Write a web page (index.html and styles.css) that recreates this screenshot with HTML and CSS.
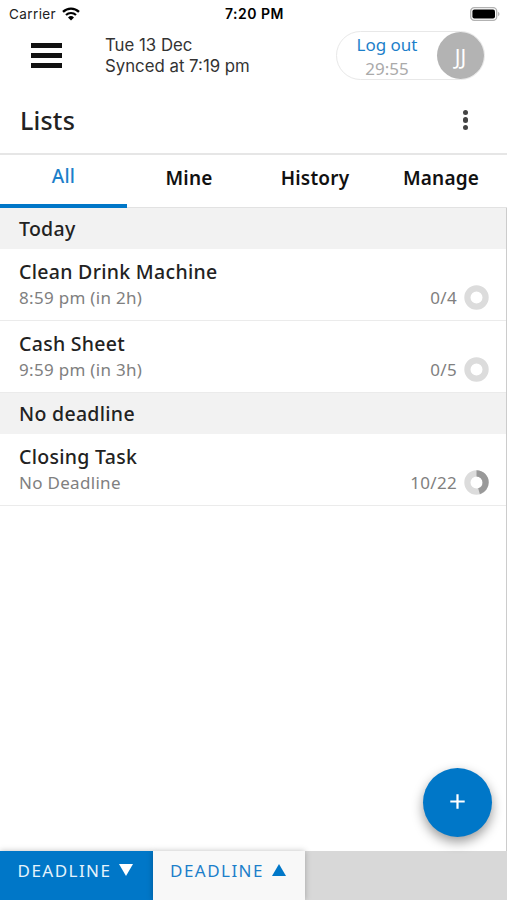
FILE: index.html
```html
<!DOCTYPE html>
<html lang="en">
<head>
    <meta charset="UTF-8">
    <meta name="viewport" content="width=device-width, initial-scale=1.0">
    <title>Lists</title>
    <link rel="stylesheet" href="styles.css">
</head>
<body>

<div class="status-bar">
    <div class="carrier">
        <span>Carrier</span>
        <svg width="18" height="14" viewBox="0 0 18 14">
            <path d="M1 4.8a11.5 11.5 0 0 1 16 0" fill="none" stroke="#000" stroke-width="2.3"/>
            <path d="M4 8a7.2 7.2 0 0 1 10 0" fill="none" stroke="#000" stroke-width="2.2"/>
            <path d="M9 13.6L6 10.5a4.3 4.3 0 0 1 6 0z"/>
        </svg>
    </div>
    <div class="clock">7:20 PM</div>
    <div class="battery">
        <svg width="30" height="14" viewBox="0 0 30 14">
            <rect x=".7" y=".7" width="26" height="12.6" rx="3.6" fill="#fff" stroke="#b2b2b2" stroke-width="1.3"/>
            <rect x="2.4" y="2.4" width="22.6" height="9.2" rx="2" fill="#000"/>
            <path d="M28.2 4.8c1.7.7 1.7 3.7 0 4.4z" fill="#aaa"/>
        </svg>
    </div>
</div>

<header class="header">
    <div class="menu"><span></span><span></span><span></span></div>
    <div class="sync">
        <div>Tue 13 Dec</div>
        <div>Synced at 7:19 pm</div>
    </div>
    <div class="session">
        <div class="session-text">
            <div class="logout">Log out</div>
            <div class="time-left">29:55</div>
        </div>
        <div class="avatar">JJ</div>
    </div>
</header>

<div class="title-bar">
    <h1>Lists</h1>
    <div class="more"><span></span><span></span><span></span></div>
</div>

<nav class="tabs">
    <div class="tab active">All</div>
    <div class="tab">Mine</div>
    <div class="tab">History</div>
    <div class="tab">Manage</div>
</nav>

<main class="lists">
    <h2>Today</h2>
    <div class="item">
        <div>
            <h3>Clean Drink Machine</h3>
            <p>8:59 pm (in 2h)</p>
        </div>
        <div class="progress">
            <span class="count">0/4</span>
            <svg class="ring" width="25" height="25" viewBox="0 0 25 25">
                <circle cx="12.5" cy="12.5" r="9.1"/>
            </svg>
        </div>
    </div>
    <div class="item">
        <div>
            <h3>Cash Sheet</h3>
            <p>9:59 pm (in 3h)</p>
        </div>
        <div class="progress">
            <span class="count">0/5</span>
            <svg class="ring" width="25" height="25" viewBox="0 0 25 25">
                <circle cx="12.5" cy="12.5" r="9.1"/>
            </svg>
        </div>
    </div>
    <h2>No deadline</h2>
    <div class="item">
        <div>
            <h3>Closing Task</h3>
            <p>No Deadline</p>
        </div>
        <div class="progress">
            <span class="count">10/22</span>
            <svg class="ring" width="25" height="25" viewBox="0 0 25 25">
                <circle cx="12.5" cy="12.5" r="9.1"/>
                <circle class="done" cx="12.5" cy="12.5" r="9.1" pathLength="22" stroke-dasharray="10 12" transform="rotate(-90 12.5 12.5)"/>
            </svg>
        </div>
    </div>
    <div class="add">
        <svg width="15" height="15" viewBox="0 0 15 15">
            <path d="M7.5 .3v14.4M.3 7.5h14.4" stroke="#fff" stroke-width="2.2"/>
        </svg>
    </div>
</main>

<footer class="sort-bar">
    <div class="sort selected">
        <span>DEADLINE</span>
        <svg width="14" height="12" viewBox="0 0 14 12"><path d="M0 0h14L7 12z"/></svg>
    </div>
    <div class="sort">
        <span>DEADLINE</span>
        <svg width="14" height="12" viewBox="0 0 14 12"><path d="M0 12h14L7 0z"/></svg>
    </div>
</footer>

</body>
</html>
```
FILE: styles.css
```css
* {
    box-sizing: border-box;
}

body {
    margin: 0;
    height: 900px;
    display: flex;
    flex-direction: column;
    overflow: hidden;
    background: #fff;
    color: #222;
    font-family: "Noto Sans", "Open Sans", sans-serif;
}

h1, h2, h3, p {
    margin: 0;
}

svg {
    display: block;
}

.status-bar {
    display: grid;
    grid-template-columns: 1fr auto 1fr;
    align-items: center;
    height: 27px;
    padding: 0 7px 0 9px;
    font-family: Inter, sans-serif;
    font-size: 13.5px;
}

.carrier {
    display: flex;
    align-items: center;
    gap: 6px;
    letter-spacing: 0.4px;
}

.clock {
    color: #000;
    font-size: 14px;
    font-weight: 600;
    letter-spacing: 0.5px;
}

.battery {
    justify-self: end;
}

.header {
    display: flex;
    height: 57px;
    padding: 4px 22px 0 31px;
}

.menu {
    display: flex;
    flex-direction: column;
    gap: 5px;
    width: 31px;
    padding-top: 12px;
}

.menu span {
    height: 5px;
    background: #111;
}

.sync {
    flex: 1;
    padding: 4px 0 0 43px;
    font-family: Inter, sans-serif;
    font-size: 16.8px;
    line-height: 21px;
    color: #333;
}

.session {
    display: flex;
    justify-content: space-between;
    width: 149px;
    height: 49px;
    border: 1px solid #e8e8e8;
    border-radius: 25px;
}

.session-text {
    width: 100px;
    padding-top: 1px;
    text-align: center;
    font-size: 17px;
    line-height: 24px;
}

.logout {
    color: #1c7fca;
}

.time-left {
    color: #aaa;
}

.avatar {
    width: 47px;
    height: 47px;
    border-radius: 50%;
    background: #b3b3b3;
    color: #fff;
    font-size: 21px;
    line-height: 51px;
    text-align: center;
}

.title-bar {
    display: flex;
    justify-content: space-between;
    align-items: center;
    height: 71px;
    padding: 3px 39px 0 20px;
    border-bottom: 2px solid #e6e6e6;
}

h1 {
    font-size: 25px;
    font-weight: 500;
    letter-spacing: 0.2px;
}

.more {
    display: flex;
    flex-direction: column;
    gap: 2px;
}

.more span {
    width: 5.5px;
    height: 5.5px;
    border-radius: 50%;
    background: #444;
}

.tabs {
    display: grid;
    grid-template-columns: repeat(4, 126px);
    height: 53px;
    text-align: center;
    font-size: 19px;
    font-weight: 600;
    line-height: 46px;
    letter-spacing: 0.2px;
    color: #111;
    border-bottom: 1px solid #e2e2e2;
}

.active {
    width: 127px;
    height: 53px;
    border-bottom: 4px solid #0077c8;
    color: #1c7fca;
    font-weight: 500;
    line-height: 42px;
}

.lists {
    position: relative;
    flex: 1;
    border-right: 1px solid #ccc;
}

h2 {
    height: 41px;
    padding-left: 19px;
    background: #f2f2f2;
    font-size: 19.5px;
    font-weight: 500;
    line-height: 42px;
    letter-spacing: 0.3px;
}

.item {
    display: flex;
    justify-content: space-between;
    height: 72px;
    padding: 10px 17px 0 19px;
    border-bottom: 1px solid #ebebeb;
}

h3 {
    font-size: 19.5px;
    font-weight: 500;
    line-height: 26px;
    letter-spacing: 0.3px;
}

.item p, .count {
    font-size: 17px;
    line-height: 26px;
    letter-spacing: 0.3px;
    color: #808080;
}

.progress {
    display: flex;
    gap: 7px;
    padding-top: 26px;
}

.ring circle {
    fill: none;
    stroke: #dcdcdc;
    stroke-width: 6.2;
}

.ring .done {
    stroke: #999;
}

/* Floating add button */
.add {
    position: absolute;
    right: 14px;
    bottom: 14px;
    z-index: 1;
    display: flex;
    justify-content: center;
    align-items: center;
    width: 69px;
    height: 69px;
    padding-bottom: 2px;
    border-radius: 50%;
    background: #0077c8;
    box-shadow: 0 5px 12px rgba(0, 0, 0, 0.4);
}

.sort-bar {
    display: flex;
    height: 49px;
    background: #d8d8d8;
}

.sort {
    display: flex;
    justify-content: center;
    width: 152px;
    padding-right: 2px;
    gap: 8px;
    background: #f8f8f8;
    box-shadow: 0 0 6px rgba(0, 0, 0, 0.25);
    color: #1c7fca;
    font-size: 17px;
    line-height: 40px;
    letter-spacing: 1.45px;
}

.sort svg {
    margin-top: 13px;
    fill: #0077c8;
}

.selected {
    width: 153px;
    background: #0077c8;
    color: #e5f3fc;
}

.selected svg {
    fill: #fff;
}
```
